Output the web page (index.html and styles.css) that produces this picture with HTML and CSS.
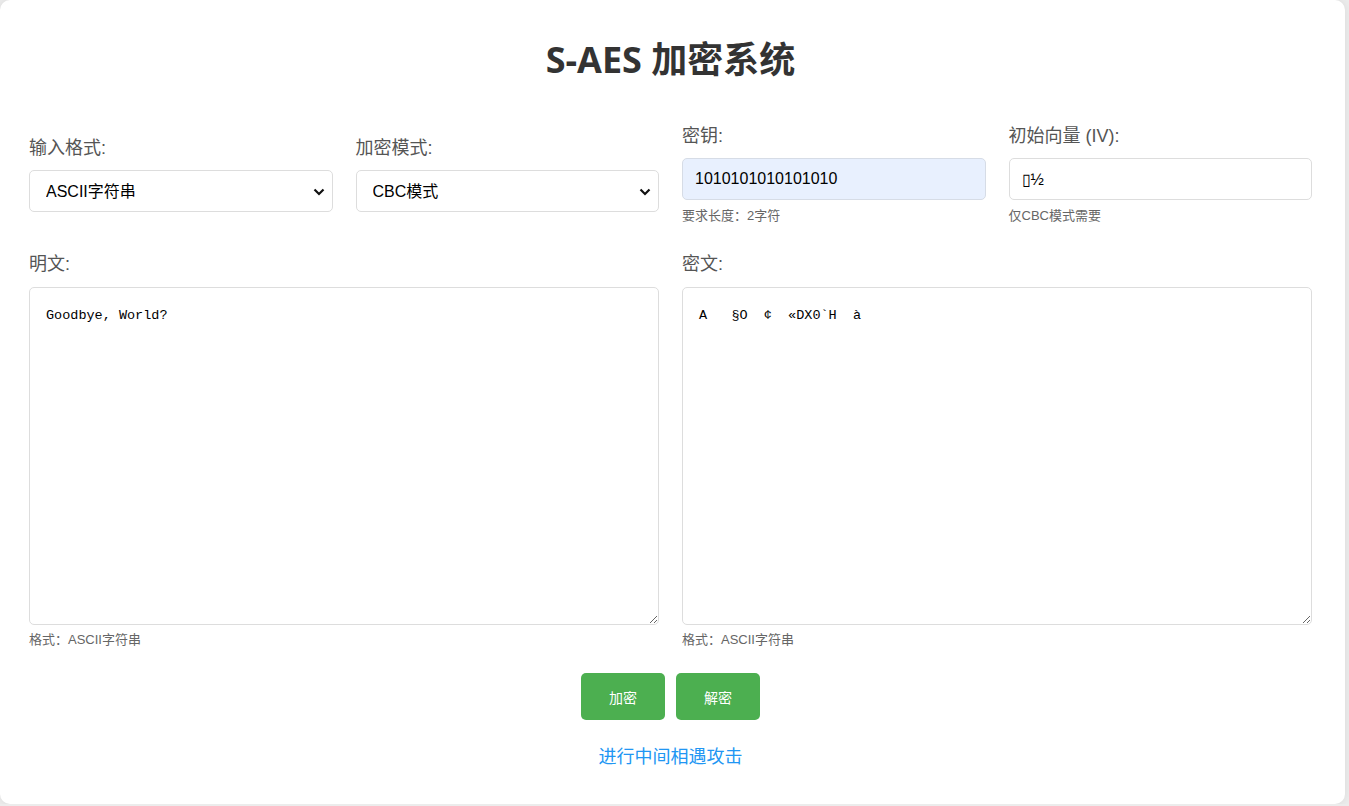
FILE: index.html
```html
<!DOCTYPE html>
<html lang="zh-CN">
<head>
<meta charset="utf-8">
<title>S-AES 加密系统</title>
<link rel="stylesheet" href="styles.css">
</head>
<body>
<div class="container">
  <h1 class="title">S-AES 加密系统</h1>

  <div class="top-row">
    <div class="half half-left">
      <div class="field">
        <label class="label">输入格式:</label>
        <div class="select-wrap">
          <select class="control select">
            <option>ASCII字符串</option>
          </select>
          <svg class="chevron" width="12" height="8" viewBox="0 0 12 8"><path d="M1.5 1.5 L6 6 L10.5 1.5" fill="none" stroke="#111" stroke-width="2.2"/></svg>
        </div>
      </div>
      <div class="field">
        <label class="label">加密模式:</label>
        <div class="select-wrap">
          <select class="control select">
            <option>CBC模式</option>
          </select>
          <svg class="chevron" width="12" height="8" viewBox="0 0 12 8"><path d="M1.5 1.5 L6 6 L10.5 1.5" fill="none" stroke="#111" stroke-width="2.2"/></svg>
        </div>
      </div>
    </div>
    <div class="half">
      <div class="field">
        <label class="label">密钥:</label>
        <input class="control input input-key" type="text" value="1010101010101010">
        <div class="hint">要求长度：2字符</div>
      </div>
      <div class="field">
        <label class="label">初始向量 (IV):</label>
        <input class="control input" type="text" value="&#x25AF;½">
        <div class="hint">仅CBC模式需要</div>
      </div>
    </div>
  </div>

  <div class="text-row">
    <div class="field">
      <label class="label">明文:</label>
      <textarea class="textarea">Goodbye, World?</textarea>
      <div class="hint hint-ta">格式：ASCII字符串</div>
    </div>
    <div class="field">
      <label class="label">密文:</label>
      <textarea class="textarea">A   §O  ¢  «DX0`H  à</textarea>
      <div class="hint hint-ta">格式：ASCII字符串</div>
    </div>
  </div>

  <div class="buttons">
    <button class="btn">加密</button>
    <button class="btn">解密</button>
  </div>

  <div class="link-row">
    <a class="link" href="#">进行中间相遇攻击</a>
  </div>
</div>
</body>
</html>
```

FILE: styles.css
```css
html, body {
  margin: 0;
  padding: 0;
}

body {
  background: #ececec;
  font-family: "Liberation Sans", "Noto Sans CJK SC", sans-serif;
  color: #333;
  overflow: hidden;
}

.container {
  box-sizing: border-box;
  width: 1345px;
  height: 804px;
  background: #fff;
  border-radius: 10px;
  box-shadow: 0 0 8px rgba(0, 0, 0, 0.08);
  padding: 20px 33px 0 29px;
}

.title {
  margin: 18px 0 45px;
  font-family: "Open Sans", "Noto Sans CJK SC", sans-serif;
  font-size: 36px;
  font-weight: 700;
  line-height: 43px;
  text-align: center;
  color: #333;
}

.top-row {
  display: grid;
  grid-template-columns: 1fr 1fr;
  column-gap: 23px;
  align-items: center;
}

.half {
  display: grid;
  grid-template-columns: 1fr 1fr;
  column-gap: 23px;
}

.field {
  display: flex;
  flex-direction: column;
  min-width: 0;
}

.label {
  font-size: 18px;
  line-height: 20px;
  color: #555;
  margin-bottom: 12px;
}

.control {
  box-sizing: border-box;
  width: 100%;
  height: 42px;
  border: 1px solid #ddd;
  border-radius: 5px;
  background: #fff;
  font-family: "Liberation Sans", "Noto Sans CJK SC", sans-serif;
  font-size: 16px;
  color: #000;
  outline: none;
  margin: 0;
}

.select-wrap {
  position: relative;
}

.select {
  appearance: none;
  -webkit-appearance: none;
  padding: 0 36px 0 16px;
}

.chevron {
  position: absolute;
  right: 8px;
  top: 18px;
  pointer-events: none;
}

.input {
  padding: 0 12px;
}

.input-key {
  background: #e8f0fe;
  border-color: #d6dce6;
}

.hint {
  font-size: 13px;
  line-height: 16px;
  color: #666;
  margin-top: 8px;
}

.text-row {
  display: grid;
  grid-template-columns: 1fr 1fr;
  column-gap: 23px;
  margin-top: 30px;
}

.text-row .label {
  margin-bottom: 13px;
}

.textarea {
  box-sizing: border-box;
  width: 100%;
  height: 338px;
  border: 1px solid #ddd;
  border-radius: 5px;
  padding: 18px 16px 16px;
  margin: 0;
  font-family: "Liberation Mono", monospace;
  font-size: 13.5px;
  line-height: 20px;
  color: #000;
  resize: vertical;
  outline: none;
  white-space: pre-wrap;
}

.hint-ta {
  margin-top: 7px;
}

.buttons {
  display: flex;
  justify-content: center;
  gap: 11px;
  margin-top: 25px;
}

.btn {
  width: 84px;
  height: 47px;
  border: none;
  border-radius: 5px;
  background: #4caf50;
  color: #fff;
  font-family: "Liberation Sans", "Noto Sans CJK SC", sans-serif;
  font-size: 14px;
  cursor: pointer;
}

.link-row {
  margin-top: 25px;
  text-align: center;
  line-height: 24px;
}

.link {
  font-size: 18px;
  color: #2196f3;
  text-decoration: none;
}
```
